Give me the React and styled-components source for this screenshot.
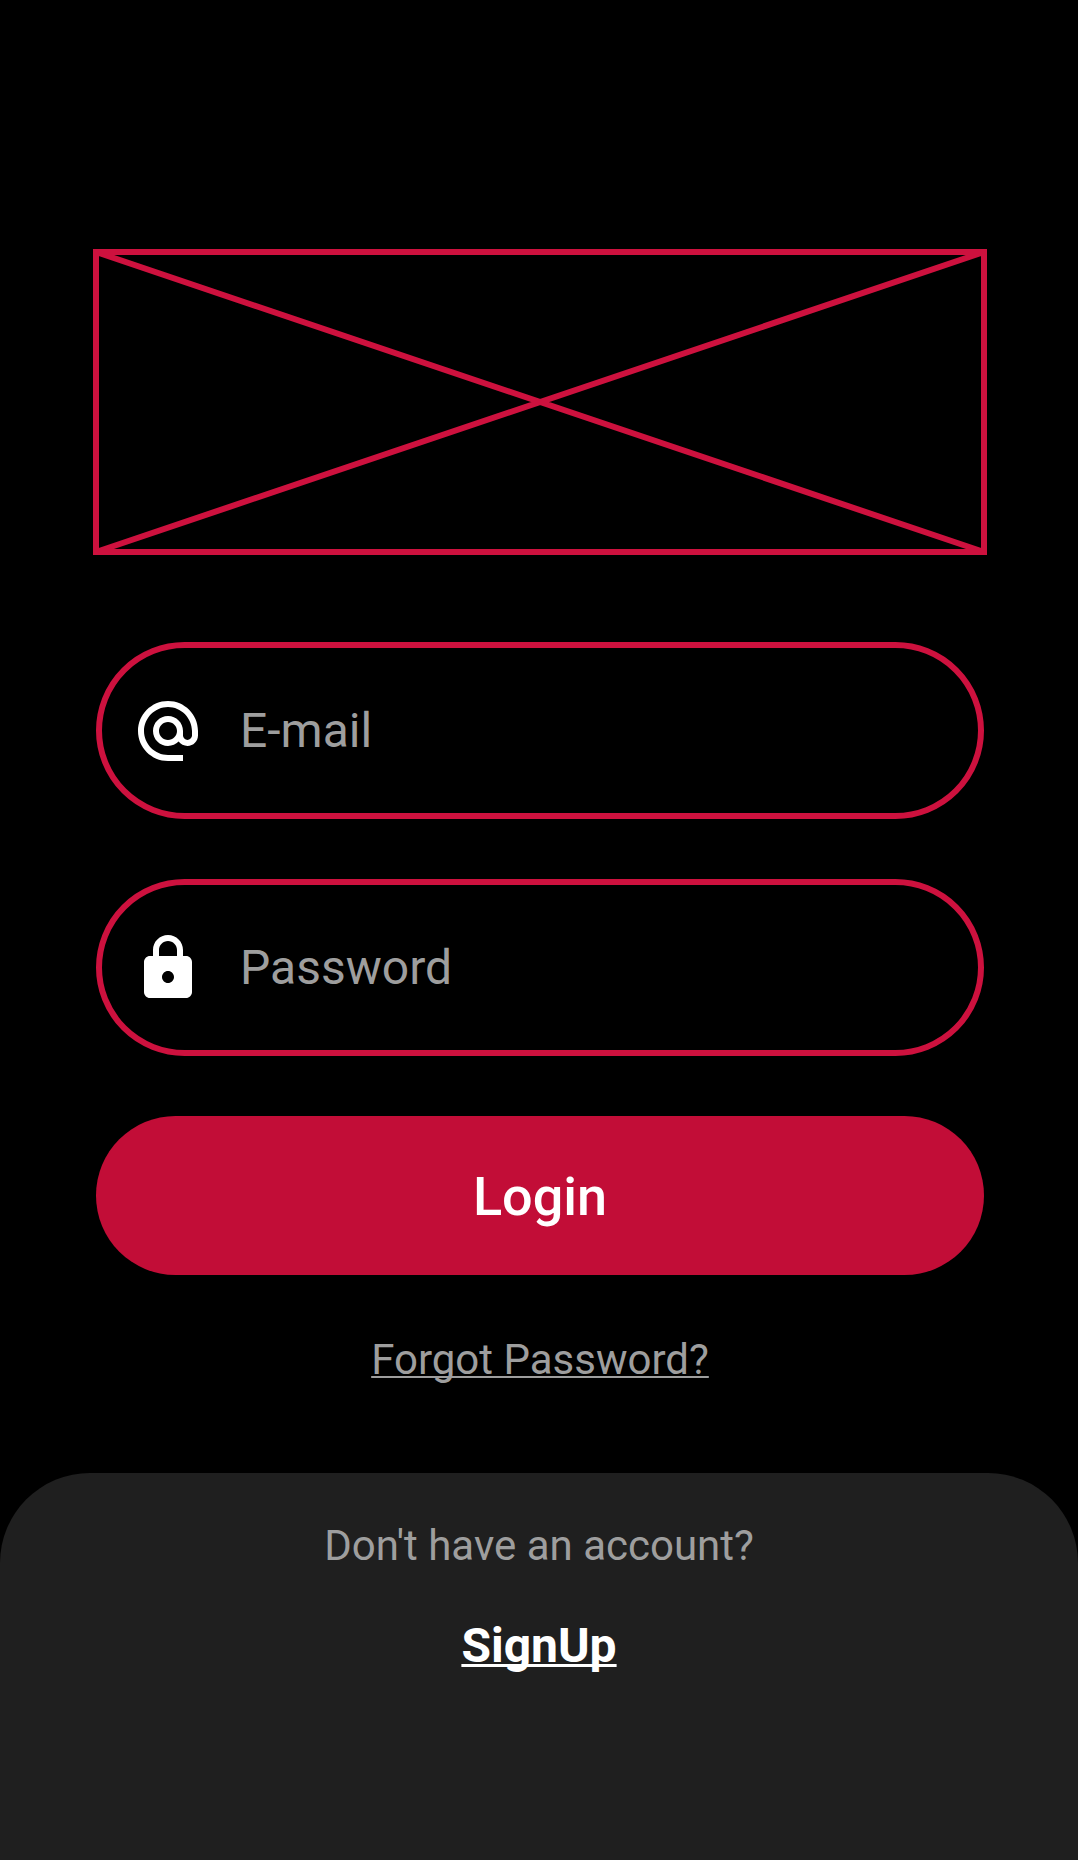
import React from "react";
import styled, { createGlobalStyle } from "styled-components";

const GlobalStyle = createGlobalStyle`
  *, *::before, *::after { box-sizing: border-box; }
  body { margin: 0; background: #000; font-family: Roboto, "Liberation Sans", sans-serif; }
`;

const Page = styled.div`
  min-height: 100vh;
  display: flex;
  flex-direction: column;
  background: #000;
`;

const Form = styled.form`
  display: flex;
  flex-direction: column;
  gap: 60px;
  padding: 249px 94px 88px 96px;
`;

const Logo = styled.svg`
  display: block;
  width: 100%;
  margin-bottom: 30px;
  overflow: visible;
  fill: none;
  stroke: #cd113e;
  stroke-width: 6px;
`;

const Field = styled.label`
  display: flex;
  align-items: center;
  height: 177px;
  padding: 0 30px;
  gap: 36px;
  border: 6px solid #cd113e;
  border-radius: 89px;
`;

const Icon = styled.svg`
  flex: none;
  width: 72px;
  height: 72px;
  fill: #fff;
`;

const Input = styled.input`
  flex: 1;
  min-width: 0;
  padding: 0;
  border: 0;
  outline: 0;
  background: transparent;
  color: #fff;
  font: 400 48px/56px Roboto, "Liberation Sans", sans-serif;
  &::placeholder { color: #9e9e9e; opacity: 1; }
`;

const Button = styled.button`
  height: 159px;
  padding: 3px 0 0;
  border: 0;
  border-radius: 80px;
  background: #c20d37;
  color: #fff;
  font: 500 54px/64px Roboto, "Liberation Sans", sans-serif;
`;

const TextLink = styled.a`
  align-self: center;
  color: ${(p) => (p.$strong ? "#fff" : "#9e9e9e")};
  font-size: ${(p) => (p.$strong ? 48 : 42)}px;
  line-height: ${(p) => (p.$strong ? 56 : 50)}px;
  font-weight: ${(p) => (p.$strong ? 700 : 400)};
  text-decoration: underline;
  text-decoration-thickness: ${(p) => (p.$strong ? 3 : 2)}px;
  text-decoration-skip-ink: none;
  text-underline-offset: 2px;
`;

const Footer = styled.footer`
  flex: 1;
  display: flex;
  flex-direction: column;
  gap: 47px;
  padding: 48px 24px;
  border-radius: 90px 90px 0 0;
  background: #1f1f1f;
`;

const Prompt = styled.p`
  margin: 0;
  color: #9e9e9e;
  font-size: 42px;
  line-height: 50px;
  text-align: center;
`;

export default function App() {
  return (
    <Page>
      <GlobalStyle />
      <Form onSubmit={(e) => e.preventDefault()}>
        <Logo viewBox="0 0 888 303" aria-hidden="true">
          <path d="M0 3H888V303H0ZL888 303M888 3L0 303" />
        </Logo>
        <Field>
          <Icon viewBox="0 0 24 24" aria-hidden="true">
            <path d="M12 2C6.480 2 2 6.480 2 12s4.480 10 10 10h5v-2h-5c-4.340 0-8-3.660-8-8s3.660-8 8-8 8 3.660 8 8v1.430c0 .79-.71 1.570-1.500 1.570s-1.500-.78-1.500-1.570V12c0-2.760-2.240-5-5-5s-5 2.240-5 5 2.240 5 5 5c1.380 0 2.640-.56 3.540-1.470.65.890 1.770 1.470 2.960 1.470 1.970 0 3.500-1.600 3.500-3.570V12c0-5.520-4.480-10-10-10zm0 13c-1.660 0-3-1.340-3-3s1.340-3 3-3 3 1.340 3 3-1.340 3-3 3z" />
          </Icon>
          <Input type="email" placeholder="E-mail" aria-label="E-mail" />
        </Field>
        <Field>
          <Icon viewBox="0 0 24 24" aria-hidden="true">
            <path d="M18 8h-1V6c0-2.760-2.240-5-5-5S7 3.240 7 6v2H6c-1.100 0-2 .9-2 2v10c0 1.100.9 2 2 2h12c1.100 0 2-.9 2-2V10c0-1.100-.9-2-2-2zm-6 9c-1.100 0-2-.9-2-2s.9-2 2-2 2 .9 2 2-.9 2-2 2zM9 8V6c0-1.660 1.340-3 3-3s3 1.340 3 3v2H9z" />
          </Icon>
          <Input type="password" placeholder="Password" aria-label="Password" />
        </Field>
        <Button type="submit">Login</Button>
        <TextLink href="#forgot">Forgot Password?</TextLink>
      </Form>
      <Footer>
        <Prompt>Don't have an account?</Prompt>
        <TextLink href="#signup" $strong>SignUp</TextLink>
      </Footer>
    </Page>
  );
}
